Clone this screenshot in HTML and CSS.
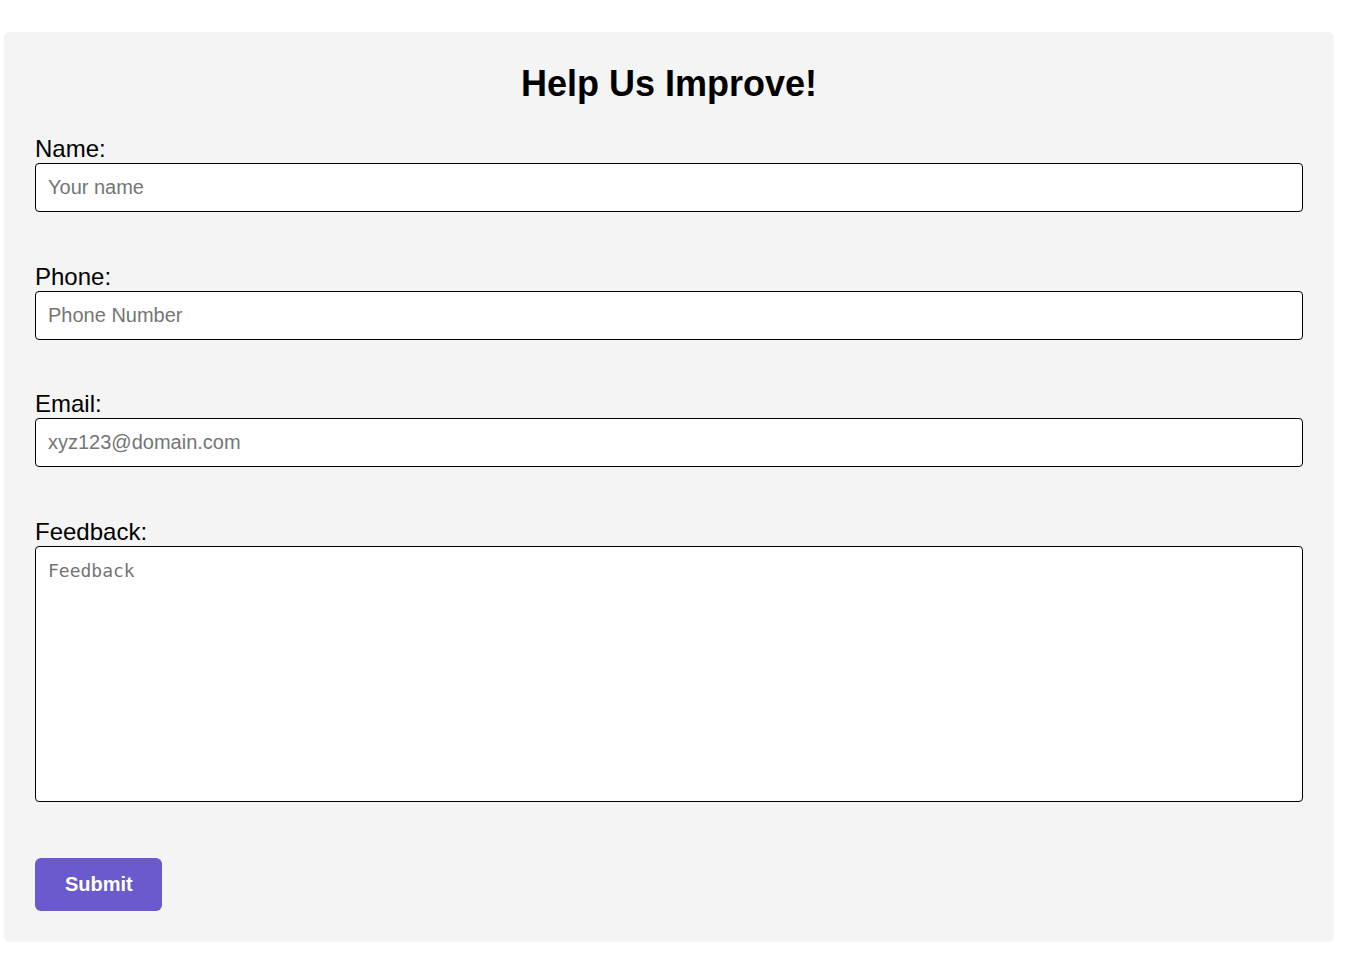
FILE: index.html
```html
<!DOCTYPE html>
<html lang="en">
<head>
<meta charset="utf-8">
<title>Help Us Improve!</title>
<link rel="stylesheet" href="styles.css">
</head>
<body>
<div class="card">
  <h1 class="title">Help Us Improve!</h1>
  <form class="form">
    <div class="field">
      <label class="label" for="name">Name:</label>
      <input class="input" id="name" type="text" placeholder="Your name">
    </div>
    <div class="field">
      <label class="label" for="phone">Phone:</label>
      <input class="input" id="phone" type="tel" placeholder="Phone Number">
    </div>
    <div class="field">
      <label class="label" for="email">Email:</label>
      <input class="input" id="email" type="email" placeholder="xyz123@domain.com">
    </div>
    <div class="field">
      <label class="label" for="feedback">Feedback:</label>
      <textarea class="textarea" id="feedback" placeholder="Feedback"></textarea>
    </div>
    <div class="actions">
      <button class="button" type="button">Submit</button>
    </div>
  </form>
</div>
</body>
</html>
```
FILE: styles.css
```css
html, body {
  margin: 0;
  padding: 0;
  background: #ffffff;
}
body {
  padding: 32px 19px 0 4px;
  font-family: "Liberation Sans", Arial, sans-serif;
}
.card {
  width: 1330px;
  box-sizing: border-box;
  background: #f4f4f4;
  border-radius: 6px;
  padding: 31px 31px 31px 31px;
}
.title {
  margin: 0 0 31px 0;
  text-align: center;
  font-size: 36px;
  font-weight: bold;
  line-height: 41px;
  color: #000;
}
.form {
  display: flex;
  flex-direction: column;
  gap: 50.67px;
}
.field {
  display: flex;
  flex-direction: column;
}
.label {
  font-size: 24px;
  line-height: 28px;
  color: #000;
}
.input, .textarea {
  box-sizing: border-box;
  width: 100%;
  border: 1px solid #000;
  border-radius: 4px;
  background: #fff;
  padding: 12px;
  margin: 0;
  font-family: "Liberation Sans", Arial, sans-serif;
  font-size: 20px;
  line-height: 23px;
  height: 49px;
  outline: none;
}
.textarea {
  height: 256px;
  resize: none;
  padding-top: 13px;
  font-family: "DejaVu Sans Mono", monospace;
  font-size: 18px;
  line-height: 21px;
  display: block;
}
.input::placeholder, .textarea::placeholder {
  color: #757575;
}
.actions {
  margin-top: 5px;
  display: flex;
}
.button {
  background: #6a5acd;
  color: #fff;
  border: none;
  border-radius: 6px;
  font-family: "Liberation Sans", Arial, sans-serif;
  font-size: 20px;
  font-weight: bold;
  line-height: 23px;
  padding: 15px 30px;
  width: 127px;
  height: 53px;
  cursor: pointer;
}
```
